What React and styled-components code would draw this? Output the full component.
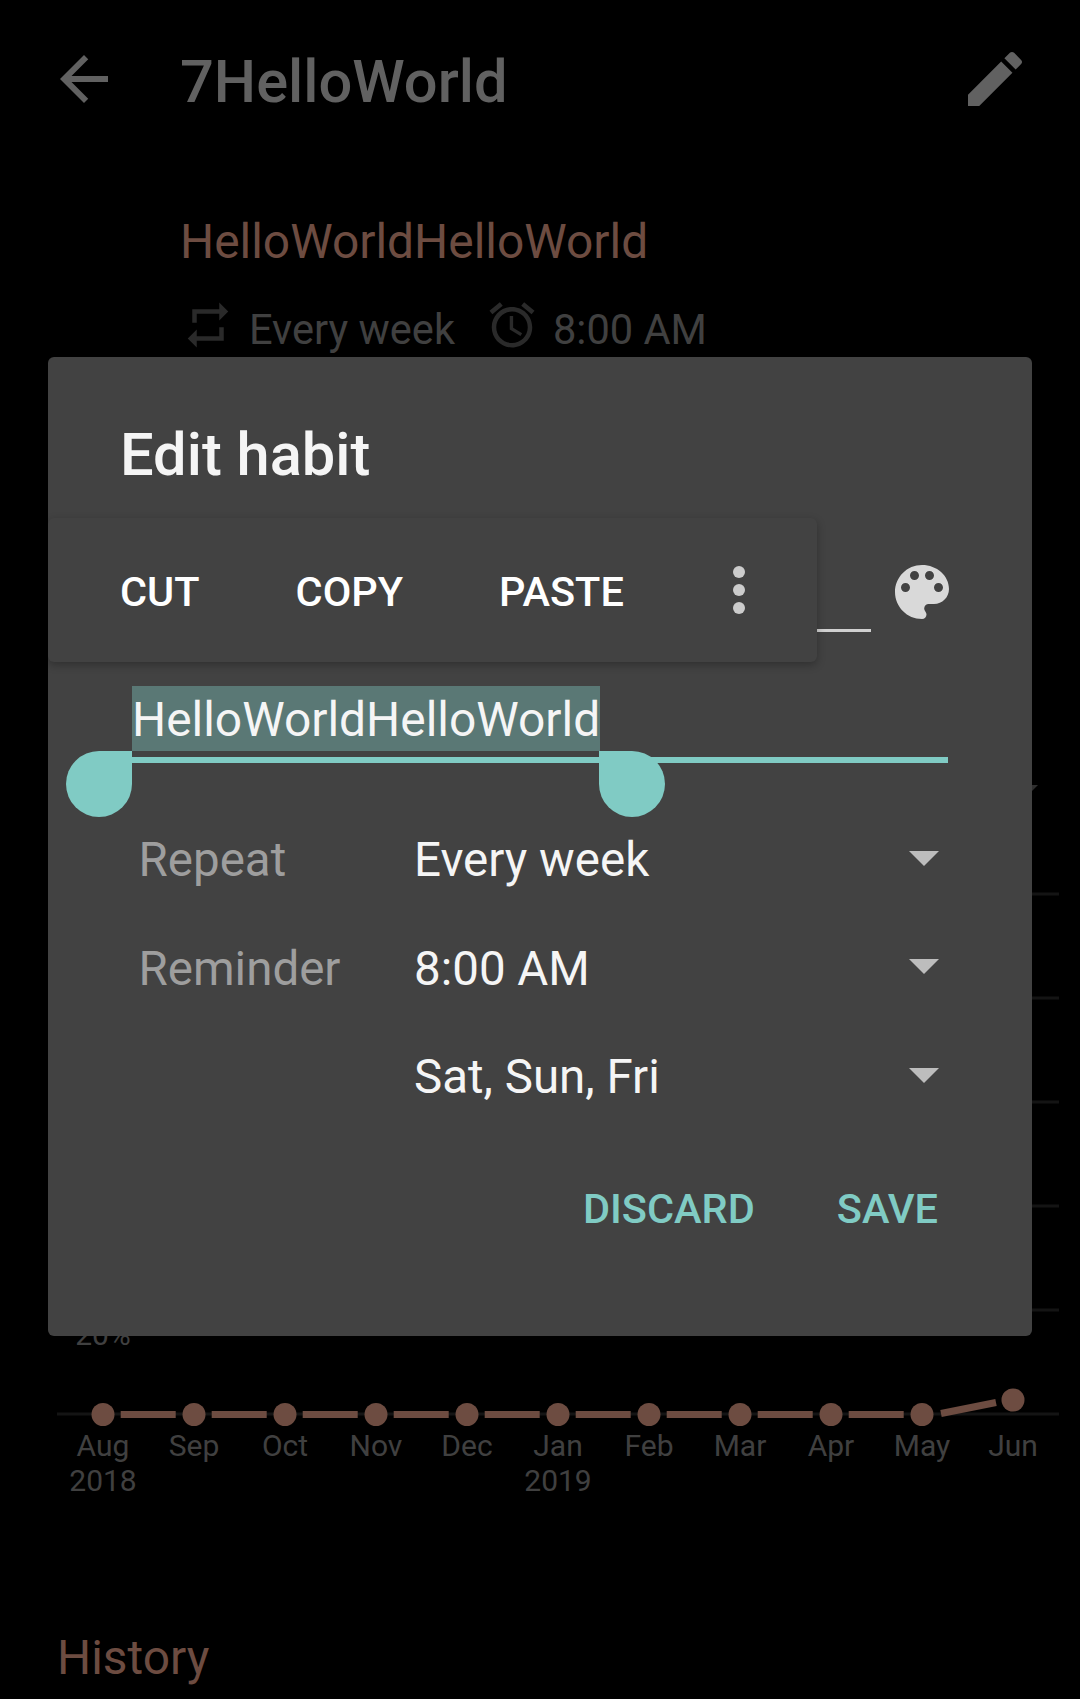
import React from "react";
import styled, { createGlobalStyle } from "styled-components";

const Global = createGlobalStyle`
  html, body { margin: 0; padding: 0; background: #000; }
  * { box-sizing: border-box; }
`;

const Page = styled.div`
  position: relative;
  width: 1080px;
  height: 1699px;
  overflow: hidden;
  background: #000;
  font-family: Roboto, "Liberation Sans", sans-serif;
`;

const AppBar = styled.header`
  display: flex;
  align-items: center;
  height: 158px;
  padding: 0 49px 0 48px;
`;

const BarIcon = styled.svg`
  flex: none;
  width: 72px;
  height: 72px;
  fill: #616161;
`;

const BarTitle = styled.h1`
  flex: 1;
  margin: 6px 0 0 60px;
  font-size: 59.6px;
  font-weight: 500;
  line-height: 70px;
  color: #616161;
`;

const Header = styled.section`
  padding: 52px 0 0 180px;
`;

const HabitName = styled.div`
  font-size: 47.9px;
  line-height: 64px;
  color: #6d4c41;
`;

const Meta = styled.div`
  display: flex;
  align-items: center;
  gap: 30px;
  margin: 23.5px 0 0 1px;
`;

const MetaItem = styled.div`
  display: flex;
  align-items: center;
  gap: 14px;
`;

const MetaIcon = styled.svg`
  flex: none;
  width: 54px;
  height: 54px;
  fill: #2a2a2a;
`;

const MetaText = styled.span`
  padding-top: 10px;
  color: #404040;
  font-size: 41.6px;
  line-height: 44px;
`;

const Chart = styled.svg`
  display: block;
  width: 1080px;
  height: 720px;
  margin-top: 432.5px;
  font-family: Roboto, "Liberation Sans", sans-serif;
`;

const History = styled.h2`
  margin: 122px 0 0 57px;
  font-size: 47.9px;
  font-weight: 400;
  line-height: 64px;
  color: #6d4c41;
`;

const Dialog = styled.div`
  position: absolute;
  left: 48px;
  top: 357px;
  width: 984px;
  height: 979px;
  background: #424242;
  border-radius: 6px;
`;

const DialogTitle = styled.h3`
  margin: 0;
  padding: 63px 0 0 72px;
  font-size: 59.6px;
  font-weight: 500;
  line-height: 70px;
  color: #f5f5f5;
`;

const NameRow = styled.div`
  display: flex;
  align-items: flex-start;
  margin-top: 66px;
  padding-left: 84px;
`;

const NameField = styled.div`
  flex: none;
  width: 739px;
  height: 76px;
  border-bottom: 3px solid #d0d0d0;
`;

const Palette = styled.svg`
  flex: none;
  width: 72px;
  height: 72px;
  margin-left: 15px;
  fill: #d9d9d9;
`;

const QuestionField = styled.div`
  width: 816px;
  height: 77px;
  margin: 54px 0 0 84px;
  border-bottom: 6px solid #80cbc4;
`;

const Selected = styled.span`
  display: inline-block;
  height: 65px;
  background: #5a7875;
  color: #f5f5f5;
  font-size: 47.9px;
  line-height: 69px;
  vertical-align: top;
`;

const Rows = styled.div`
  margin-top: 43px;
  padding: 0 91px 0 90.5px;
`;

const Row = styled.div`
  display: grid;
  grid-template-columns: 275.5px 1fr 32px;
  align-items: center;
  height: 108.5px;
  font-size: 47.5px;
`;

const RowLabel = styled.span`
  color: #9e9e9e;
`;

const RowValue = styled.span`
  color: #f5f5f5;
`;

const Caret = styled.span`
  width: 0;
  height: 0;
  margin-bottom: 4px;
  border-left: 15px solid transparent;
  border-right: 15px solid transparent;
  border-top: 15px solid #bdbdbd;
`;

const Actions = styled.div`
  display: flex;
  justify-content: flex-end;
  gap: 82px;
  margin-top: 52px;
  padding-right: 94px;
`;

const Action = styled.span`
  font-size: 41.5px;
  font-weight: 500;
  line-height: 50px;
  color: #80cbc4;
`;

const Toolbar = styled.div`
  position: absolute;
  left: 0;
  top: 161px;
  display: flex;
  align-items: center;
  gap: 96px;
  width: 769px;
  height: 144px;
  padding: 4px 0 0 72px;
  background: #424242;
  border-radius: 6px;
  box-shadow: 0 3px 9px rgba(0, 0, 0, 0.28);
`;

const ToolbarItem = styled.span`
  font-size: 41.5px;
  font-weight: 500;
  line-height: 50px;
  color: #fff;
`;

const More = styled.svg`
  position: absolute;
  left: 655px;
  top: 36px;
  width: 72px;
  height: 72px;
  fill: #cccccc;
`;

const Handle = styled.div`
  position: absolute;
  top: 394px;
  left: ${(p) => p.$left}px;
  width: 66px;
  height: 66px;
  background: #80cbc4;
  border-radius: 50%;
  ${(p) => (p.$side === "left" ? "border-top-right-radius: 0;" : "border-top-left-radius: 0;")}
`;

const months = [
  ["Aug", "2018"], ["Sep"], ["Oct"], ["Nov"], ["Dec"], ["Jan", "2019"],
  ["Feb"], ["Mar"], ["Apr"], ["May"], ["Jun"],
];
const gridY = [110, 214, 318, 422, 526, 630];
const CHART_TOP = 784;

function ChartDrawing() {
  const base = 1414.5 - CHART_TOP;
  return (
    <Chart viewBox="0 0 1080 720">
      <path d="M1014 1 H1038 L1026 13 Z" fill="#2f2f2f" />
      {gridY.map((y) => (
        <rect key={y} x="57" y={y - 1.5} width="1002" height="3" fill="#141414" />
      ))}
      <text x="103" y={1345 - CHART_TOP} fontSize="30" fill="#404040" textAnchor="middle">20%</text>
      {months.map((m, i) => {
        const x = 103 + i * 91;
        const last = i === 10;
        return (
          <g key={m[0]}>
            {i < 9 && <rect x={x + 17.7} y={base - 3.5} width={55} height="7" fill="#6d4c41" />}
            {i === 9 && <path d={`M${x + 19} ${base - 1} L${x + 74} ${base - 12}`} stroke="#6d4c41" strokeWidth="7" />}
            <circle cx={x} cy={last ? base - 14.5 : base} r="11.5" fill="#6d4c41" />
            <text x={x} y={1456 - CHART_TOP} fontSize="30" fill="#404040" textAnchor="middle">{m[0]}</text>
            {m[1] && <text x={x} y={1491 - CHART_TOP} fontSize="30" fill="#404040" textAnchor="middle">{m[1]}</text>}
          </g>
        );
      })}
    </Chart>
  );
}

export default function App() {
  return (
    <Page>
      <Global />
      <AppBar>
        <BarIcon viewBox="0 0 24 24"><path d="M20 11H7.83l5.59-5.59L12 4l-8 8 8 8 1.41-1.41L7.83 13H20v-2z" /></BarIcon>
        <BarTitle>7HelloWorld</BarTitle>
        <BarIcon viewBox="0 0 24 24"><path d="M3 17.25V21h3.75L17.81 9.94l-3.75-3.75L3 17.25zM20.71 7.04c.39-.39.39-1.02 0-1.41l-2.34-2.34c-.39-.39-1.02-.39-1.41 0l-1.83 1.83 3.75 3.75 1.83-1.83z" /></BarIcon>
      </AppBar>
      <Header>
        <HabitName>HelloWorldHelloWorld</HabitName>
        <Meta>
          <MetaItem>
            <MetaIcon viewBox="0 0 24 24"><path d="M7 7h10v3l4-4-4-4v3H5v6h2V7zm10 10H7v-3l-4 4 4 4v-3h12v-6h-2v4z" /></MetaIcon>
            <MetaText>Every week</MetaText>
          </MetaItem>
          <MetaItem>
            <MetaIcon viewBox="0 0 24 24"><path d="M22 5.72l-4.6-3.86-1.29 1.53 4.6 3.86L22 5.72zM7.88 3.39L6.6 1.86 2 5.71l1.29 1.53 4.59-3.85zM12.5 8H11v6l4.75 2.85.75-1.23-4-2.37V8zM12 4c-4.97 0-9 4.03-9 9s4.03 9 9 9 9-4.03 9-9-4.03-9-9-9zm0 16c-3.87 0-7-3.13-7-7s3.13-7 7-7 7 3.13 7 7-3.13 7-7 7z" /></MetaIcon>
            <MetaText>8:00 AM</MetaText>
          </MetaItem>
        </Meta>
      </Header>
      <ChartDrawing />
      <History>History</History>

      <Dialog>
        <DialogTitle>Edit habit</DialogTitle>
        <NameRow>
          <NameField />
          <Palette viewBox="0 0 24 24"><path d="M12 3c-4.97 0-9 4.03-9 9s4.03 9 9 9c.83 0 1.5-.67 1.5-1.5 0-.39-.15-.74-.39-1.01-.23-.26-.38-.61-.38-.99 0-.83.67-1.5 1.5-1.5H16c2.76 0 5-2.24 5-5 0-4.42-4.03-8-9-8zm-5.5 9c-.83 0-1.5-.67-1.5-1.5S5.67 9 6.5 9 8 9.67 8 10.5 7.33 12 6.5 12zm3-4C8.67 8 8 7.33 8 6.5S8.67 5 9.5 5s1.5.67 1.5 1.5S10.33 8 9.5 8zm5 0c-.83 0-1.5-.67-1.5-1.5S13.67 5 14.5 5s1.5.67 1.5 1.5S15.33 8 14.5 8zm3 4c-.83 0-1.5-.67-1.5-1.5S16.67 9 17.5 9s1.5.67 1.5 1.5-.67 1.5-1.5 1.5z" /></Palette>
        </NameRow>
        <QuestionField><Selected>HelloWorldHelloWorld</Selected></QuestionField>
        <Rows>
          <Row><RowLabel>Repeat</RowLabel><RowValue>Every week</RowValue><Caret /></Row>
          <Row><RowLabel>Reminder</RowLabel><RowValue>8:00 AM</RowValue><Caret /></Row>
          <Row><span /><RowValue>Sat, Sun, Fri</RowValue><Caret /></Row>
        </Rows>
        <Actions>
          <Action>DISCARD</Action>
          <Action>SAVE</Action>
        </Actions>
        <Toolbar>
          <ToolbarItem>CUT</ToolbarItem>
          <ToolbarItem>COPY</ToolbarItem>
          <ToolbarItem>PASTE</ToolbarItem>
          <More viewBox="0 0 24 24"><circle cx="12" cy="6" r="2" /><circle cx="12" cy="12" r="2" /><circle cx="12" cy="18" r="2" /></More>
        </Toolbar>
        <Handle $side="left" $left={18} />
        <Handle $side="right" $left={551} />
      </Dialog>
    </Page>
  );
}
